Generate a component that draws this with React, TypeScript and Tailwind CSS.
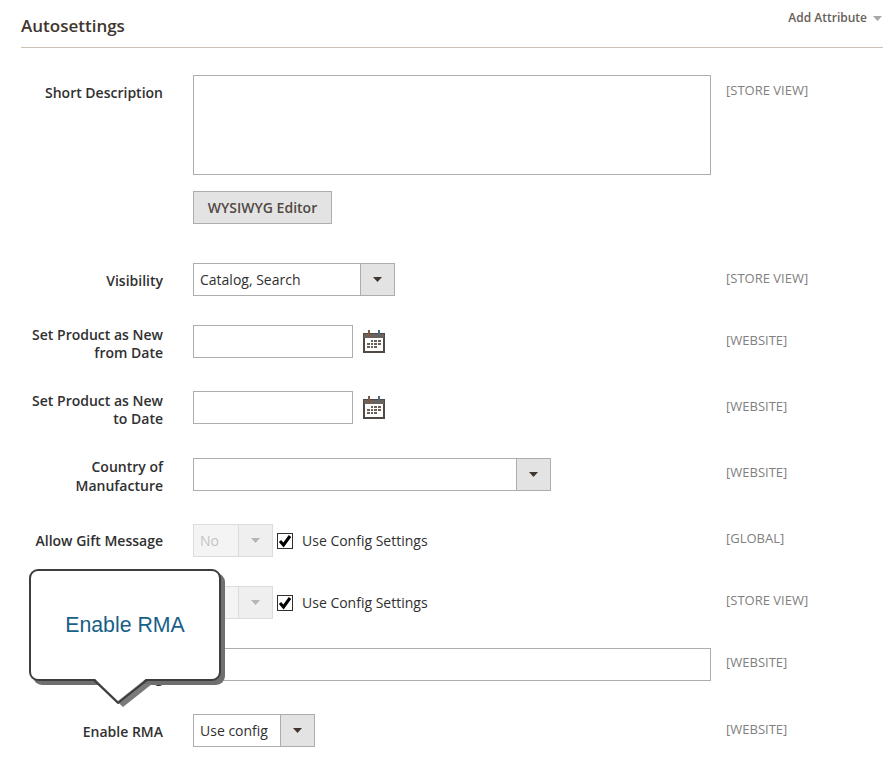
function Label({ lines, className }: { lines: string[]; className: string }) {
  return (
    <div className={`w-[142px] ml-[21px] text-right text-[14px] font-semibold text-[#303030] shrink-0 ${className}`}>
      {lines.map((line) => (
        <div key={line}>{line}</div>
      ))}
    </div>
  );
}

function Scope({ children, className = "top-[6px]" }: { children: string; className?: string }) {
  return (
    <div className={`absolute left-[726px] text-[13px] leading-[18px] text-[#808080] ${className}`}>
      {children}
    </div>
  );
}

function Arrow({ fill }: { fill: string }) {
  return (
    <svg width="9" height="5" viewBox="0 0 9 5">
      <path d="M0 0h9L4.500 5z" fill={fill} />
    </svg>
  );
}

function Select({
  value,
  width,
  disabled = false,
}: {
  value: string;
  width: string;
  disabled?: boolean;
}) {
  return (
    <div
      className={`flex h-[33px] border ${width} ${
        disabled ? "border-[#dcdcdc] bg-[#f4f4f4] text-[#c4c4c4]" : "border-[#adadad] bg-white text-[#303030]"
      }`}
    >
      <div className="flex-1 pl-[6px] text-[14px] leading-[31px] whitespace-nowrap overflow-hidden">{value}</div>
      <div
        className={`flex items-center justify-center w-[34px] border-l ${
          disabled ? "border-[#dcdcdc] bg-[#efefef]" : "border-[#adadad] bg-[#e3e3e3]"
        }`}
      >
        <Arrow fill={disabled ? "#b5b5b5" : "#41362f"} />
      </div>
    </div>
  );
}

function TextInput({ width }: { width: string }) {
  return <div className={`h-[33px] border border-[#adadad] bg-white ${width}`} />;
}

function CalendarIcon() {
  return (
    <svg width="23" height="23" viewBox="0 0 23 23" className="ml-[10px] mt-[5px] shrink-0">
      <rect x="1" y="4" width="20" height="18" fill="#fff" stroke="#514943" strokeWidth="2" />
      <rect x="1" y="4" width="20" height="4" fill="#6d625a" />
      <rect x="5" y="0" width="2" height="7" fill="#7d5a4a" />
      <rect x="15" y="0" width="2" height="7" fill="#4a6a84" />
      <path
        d="M8 10h2v2H8zM11 10h3v2h-3zM15 10h3v2h-3zM4 13h3v2H4zM8 13h2v2H8zM11 13h3v2h-3zM15 13h3v2h-3zM4 16h3v2H4zM8 16h2v2H8zM11 16h3v2h-3z"
        fill="#6d625a"
      />
    </svg>
  );
}

function ConfigCheck() {
  return (
    <div className="flex items-center ml-[4px] h-[33px]">
      <div className="relative w-[16px] h-[16px] border border-[#303030] bg-white">
        <svg width="16" height="14" viewBox="0 0 16 14" className="absolute left-[-1px] top-0">
          <path d="M3 7l3.500 4L13 2" fill="none" stroke="#000" strokeWidth="3" />
        </svg>
      </div>
      <span className="ml-[9px] text-[14px] text-[#303030]">Use Config Settings</span>
    </div>
  );
}

export default function App() {
  return (
    <div className="relative w-[889px] h-[771px] overflow-hidden bg-white font-['Open_Sans',sans-serif]">
      <div className="flex justify-between items-start ml-[21px] w-[862px] h-[48px] border-b border-[#cac3b4]">
        <h2 className="mt-[14px] text-[17px] leading-[24px] font-semibold text-[#41362f]">Autosettings</h2>
        <div className="flex items-center gap-[6px] mt-[9px] mr-[1px] text-[12px] leading-[18px] font-semibold text-[#676056]">
          Add Attribute
          <Arrow fill="#a8a8a8" />
        </div>
      </div>

      <div className="relative flex mt-[27px]">
        <Label lines={["Short Description"]} className="pt-[9px] leading-[18px]" />
        <div className="ml-[30px]">
          <div className="w-[518px] h-[100px] border border-[#adadad] bg-white" />
          <button className="block mt-[16px] w-[139px] h-[33px] border border-[#adadad] bg-[#e3e3e3] text-[14px] font-semibold text-[#514943]">
            WYSIWYG Editor
          </button>
        </div>
        <Scope>[STORE VIEW]</Scope>
      </div>

      <div className="relative flex mt-[39px]">
        <Label lines={["Visibility"]} className="pt-[9px] leading-[18px]" />
        <div className="ml-[30px]">
          <Select value="Catalog, Search" width="w-[202px]" />
        </div>
        <Scope>[STORE VIEW]</Scope>
      </div>

      <div className="relative flex mt-[29px] h-[33px]">
        <Label lines={["Set Product as New", "from Date"]} className="pt-[1px] leading-[18px]" />
        <div className="ml-[30px] flex items-start">
          <TextInput width="w-[160px]" />
          <CalendarIcon />
        </div>
        <Scope>[WEBSITE]</Scope>
      </div>

      <div className="relative flex mt-[33px] h-[33px]">
        <Label lines={["Set Product as New", "to Date"]} className="pt-[1px] leading-[18px]" />
        <div className="ml-[30px] flex items-start">
          <TextInput width="w-[160px]" />
          <CalendarIcon />
        </div>
        <Scope>[WEBSITE]</Scope>
      </div>

      <div className="relative flex mt-[34px] h-[33px]">
        <Label lines={["Country of", "Manufacture"]} className="-mt-[1px] leading-[19px]" />
        <div className="ml-[30px]">
          <Select value="" width="w-[358px]" />
        </div>
        <Scope className="top-[5px]">[WEBSITE]</Scope>
      </div>

      <div className="relative flex mt-[33px] h-[33px]">
        <Label lines={["Allow Gift Message"]} className="pt-[8px] leading-[18px]" />
        <div className="ml-[30px] flex">
          <Select value="No" width="w-[80px]" disabled />
          <ConfigCheck />
        </div>
        <Scope className="top-[5px]">[GLOBAL]</Scope>
      </div>

      <div className="relative flex mt-[29px] h-[33px]">
        <Label lines={["Gift Wrapping"]} className="pt-[8px] leading-[18px]" />
        <div className="ml-[30px] flex">
          <Select value="Yes" width="w-[80px]" disabled />
          <ConfigCheck />
        </div>
        <Scope className="top-[5px]">[STORE VIEW]</Scope>
      </div>

      <div className="relative flex mt-[29px] h-[33px]">
        <Label lines={["Advertised", "Pricing"]} className="pt-[3px] leading-[18px]" />
        <div className="ml-[30px]">
          <TextInput width="w-[518px]" />
        </div>
        <Scope className="top-[5px]">[WEBSITE]</Scope>
      </div>

      <div className="relative flex mt-[33px] h-[33px]">
        <Label lines={["Enable RMA"]} className="pt-[9px] leading-[18px]" />
        <div className="ml-[30px]">
          <Select value="Use config" width="w-[122px]" />
        </div>
        <Scope>[WEBSITE]</Scope>
      </div>

      {/* Tooltip over the form */}
      <div className="absolute left-[29px] top-[569px] w-[192px] h-[112px] rounded-[9px] border-2 border-[#3d3d3d] bg-white shadow-[4px_4px_0_#6f6f6f] flex items-center justify-center">
        <span className="pt-[2px] font-['Liberation_Sans',sans-serif] text-[21.300px] text-[#176087]">Enable RMA</span>
      </div>
      <svg width="70" height="34" viewBox="0 0 70 34" className="absolute left-[90px] top-[678px]">
        <path d="M8 6L33 29 62 6z" fill="#7a7a7a" />
        <path d="M4 0L28 23 57 0z" fill="#fff" />
        <path d="M4 2L28 25 57 2" fill="none" stroke="#3d3d3d" strokeWidth="2" />
      </svg>
    </div>
  );
}
